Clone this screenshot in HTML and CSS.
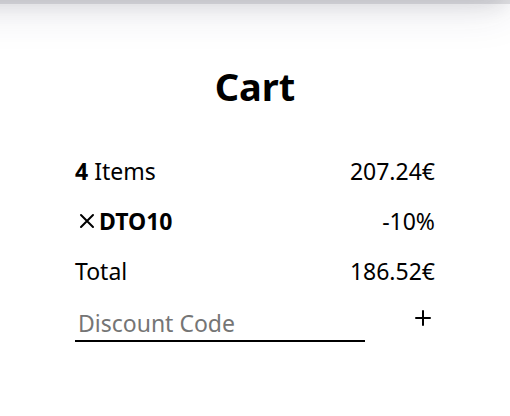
FILE: index.html
```html
<!DOCTYPE html>
<html lang="en">
<head>
<meta charset="utf-8">
<meta name="viewport" content="width=device-width, initial-scale=1">
<title>Cart</title>
<link rel="stylesheet" href="styles.css">
</head>
<body>
<div class="shade"></div>
<header class="topbar"></header>
<main class="cart">
  <h1 class="title">Cart</h1>
  <div class="row"><span><b>4</b> Items</span><span>207.24€</span></div>
  <div class="row">
    <span class="coupon">
      <button class="icon-button" type="button" aria-label="Remove discount"><svg class="icon" viewBox="0 0 24 24"><path d="M6 6 18 18M18 6 6 18"/></svg></button>
      <b>DTO10</b>
    </span>
    <span>-10%</span>
  </div>
  <div class="row"><span>Total</span><span>186.52€</span></div>
  <form class="discount">
    <input class="field" type="text" placeholder="Discount Code" aria-label="Discount Code">
    <button class="icon-button" type="button" aria-label="Apply discount"><svg class="icon" viewBox="0 0 24 24"><path d="M12 5V19M5 12H19"/></svg></button>
  </form>
</main>
</body>
</html>
```
FILE: styles.css
```css
* { box-sizing: border-box; }
body {
  margin: 0;
  background: #fff;
  color: #000;
  font-family: "Noto Sans", sans-serif;
  font-size: 23px;
  line-height: 32px;
}
.shade {
  height: 0;
  box-shadow:
    -52px -42px 46px 50px rgba(50, 50, 93, 0.13),
    -54px -44px 20px 50px rgba(0, 0, 0, 0.09);
}
.topbar {
  height: 4px;
  background: rgba(50, 46, 62, 0.13);
}
.cart { padding: 54px 75px; }
.title {
  margin: 0 0 41px;
  font-size: 38px;
  line-height: 56px;
  text-align: center;
}
.row {
  display: flex;
  justify-content: space-between;
  margin-bottom: 18px;
}
.coupon { display: flex; align-items: center; }
.icon-button {
  display: flex;
  padding: 0;
  border: 0;
  background: none;
}
.icon {
  width: 24px;
  height: 24px;
  fill: none;
  stroke: #000;
  stroke-width: 2;
  stroke-linecap: round;
}
.discount {
  display: flex;
  align-items: flex-start;
  justify-content: space-between;
  padding-top: 1px;
}
.field {
  width: 290px;
  padding: 1px 3px;
  border: 0;
  border-bottom: 2px solid #000;
  background: none;
  font: inherit;
}
.field::placeholder { color: #757575; }
```
